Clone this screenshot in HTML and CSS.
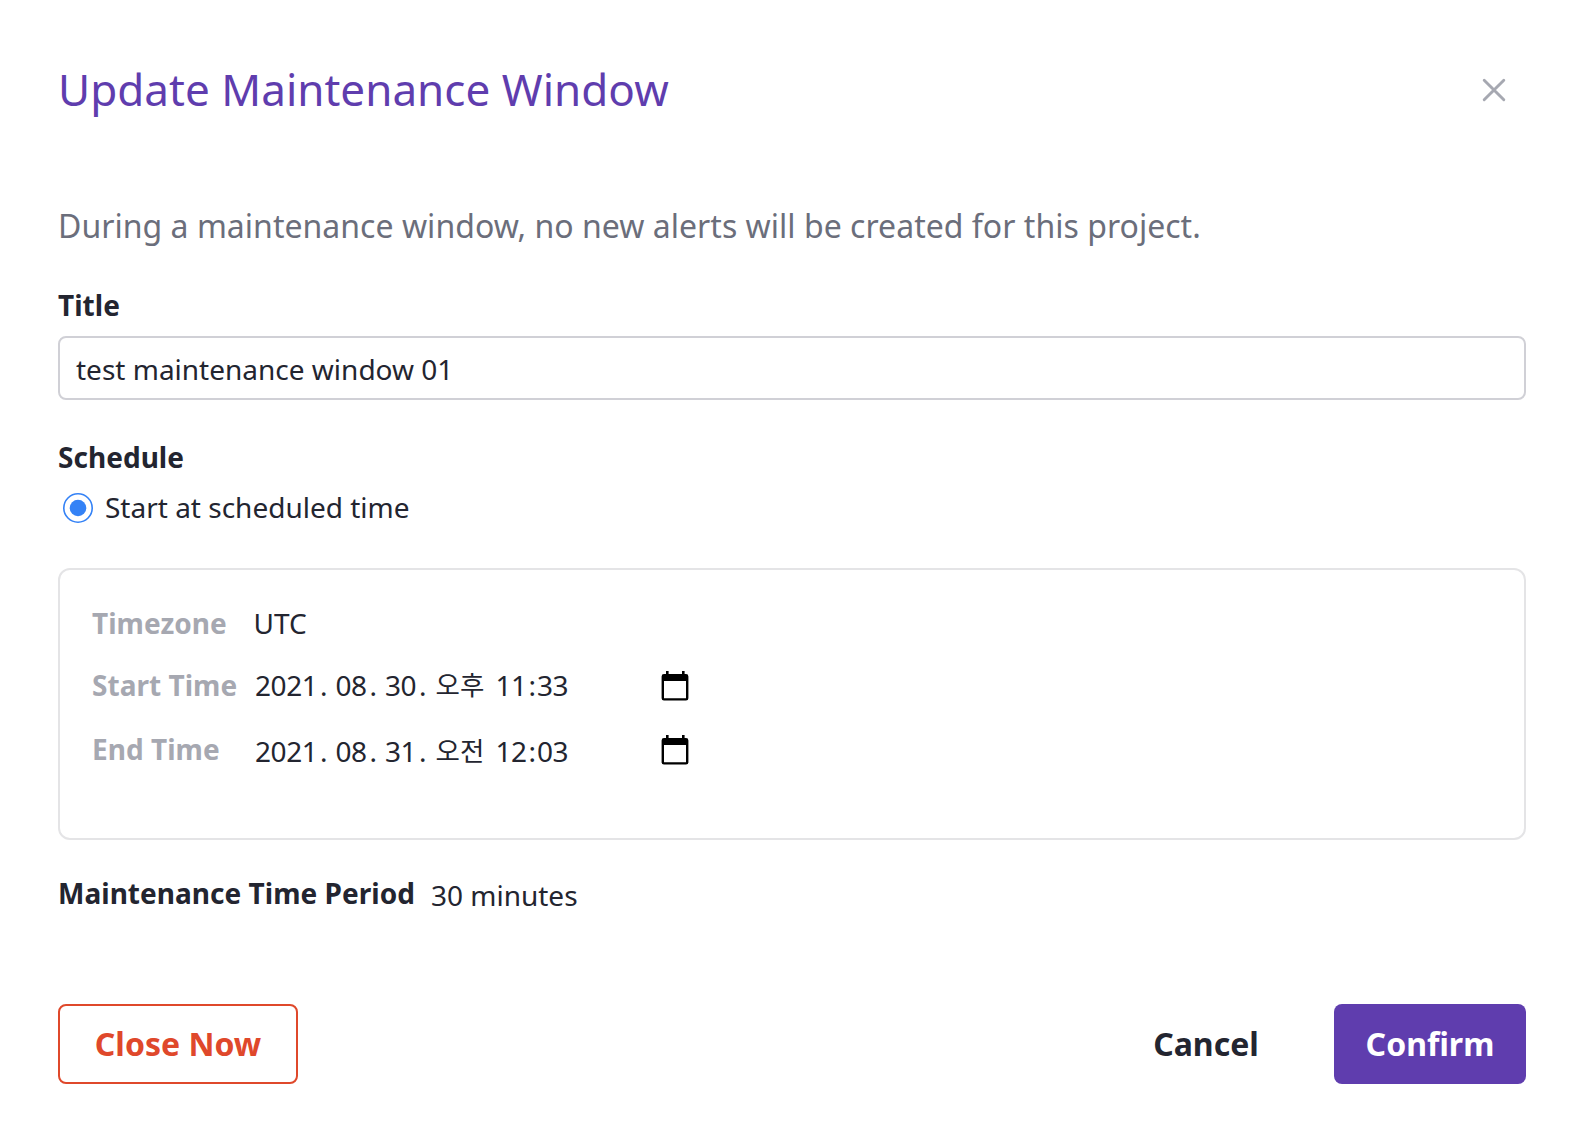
FILE: index.html
```html
<!DOCTYPE html>
<html lang="en">
<head>
<meta charset="utf-8">
<title>Update Maintenance Window</title>
<link rel="stylesheet" href="styles.css">
</head>
<body>
<main class="modal">
  <header class="modal-header">
    <h1 class="modal-title">Update Maintenance Window</h1>
    <button class="close-icon" type="button" aria-label="Close">
      <svg width="24" height="24" viewBox="0 0 24 24"><path d="M2.2 2.2 21.8 21.8M21.8 2.2 2.2 21.8" fill="none" stroke="#a6a8b1" stroke-width="2.9" stroke-linecap="round"/></svg>
    </button>
  </header>
  <p class="description">During a maintenance window, no new alerts will be created for this project.</p>
  <section class="field">
    <h2 class="label">Title</h2>
    <div class="text-input">test maintenance window 01</div>
  </section>
  <section class="field schedule">
    <h2 class="label">Schedule</h2>
    <div class="radio-row">
      <svg class="radio" width="30" height="30" viewBox="0 0 30 30"><circle cx="15" cy="15" r="14.2" fill="#fff" stroke="#3482f6" stroke-width="1.6"/><circle cx="15" cy="15" r="8.3" fill="#3482f6"/></svg>
      <span class="radio-text">Start at scheduled time</span>
    </div>
  </section>
  <section class="schedule-box">
    <div class="row">
      <span class="row-label">Timezone</span>
      <span class="row-value">UTC</span>
    </div>
    <div class="row">
      <span class="row-label">Start Time</span>
      <span class="datetime"><span class="year">2021</span><span class="dot">.</span><span class="part">08</span><span class="dot">.</span><span class="part">30</span><span class="dot">.</span><span class="ampm">오후</span><span class="hour">11</span><span class="colon">:</span><span class="minute">33</span></span>
      <svg class="calendar" width="28" height="30" viewBox="0 0 28 30"><path fill-rule="evenodd" d="M5 0h2.6v3h13.4V0h2.6v3H25a2.4 2.4 0 0 1 2.4 2.4v21.8a2.4 2.4 0 0 1-2.4 2.4H3a2.4 2.4 0 0 1-2.4-2.4V5.4A2.4 2.4 0 0 1 3 3h2zM3 10v17.2h22V10z"/></svg>
    </div>
    <div class="row">
      <span class="row-label">End Time</span>
      <span class="datetime end"><span class="year">2021</span><span class="dot">.</span><span class="part">08</span><span class="dot">.</span><span class="part">31</span><span class="dot">.</span><span class="ampm">오전</span><span class="hour">12</span><span class="colon">:</span><span class="minute">03</span></span>
      <svg class="calendar" width="28" height="30" viewBox="0 0 28 30"><path fill-rule="evenodd" d="M5 0h2.6v3h13.4V0h2.6v3H25a2.4 2.4 0 0 1 2.4 2.4v21.8a2.4 2.4 0 0 1-2.4 2.4H3a2.4 2.4 0 0 1-2.4-2.4V5.4A2.4 2.4 0 0 1 3 3h2zM3 10v17.2h22V10z"/></svg>
    </div>
  </section>
  <section class="period">
    <h2 class="label">Maintenance Time Period</h2>
    <span class="period-value">30 minutes</span>
  </section>
  <footer class="actions">
    <button class="btn danger" type="button">Close Now</button>
    <button class="btn plain" type="button">Cancel</button>
    <button class="btn primary" type="button">Confirm</button>
  </footer>
</main>
</body>
</html>
```
FILE: styles.css
```css
* { box-sizing: border-box; }
body {
  margin: 0;
  background: #fff;
  color: #232530;
  font: 28px/38px "Noto Sans", "Noto Sans CJK KR", sans-serif;
}
h1, h2, p { margin: 0; }
button { margin: 0; padding: 0; border: 0; background: none; font: inherit; }
svg { display: block; flex: none; }
.modal {
  display: flex;
  flex-direction: column;
  width: 1584px;
  height: 1136px;
  padding: 59px 58px 52px;
}
.modal-header {
  display: flex;
  justify-content: space-between;
  align-items: center;
  height: 60px;
  padding-right: 20px;
}
.modal-title { color: #5f3dae; font-size: 44px; font-weight: 400; line-height: 60px; letter-spacing: 0.02px; }
.close-icon { margin-top: 2px; }
.description { margin-top: 85px; color: #6b6e7b; font-size: 32px; line-height: 44px; letter-spacing: 0.025px; }
.label { font-size: 28px; font-weight: 700; line-height: 38px; letter-spacing: 0.03px; white-space: nowrap; }
.field { margin-top: 38px; }
.text-input {
  height: 64px;
  margin-top: 12px;
  padding: 1px 16px 0;
  border: 2px solid #d0d0d6;
  border-radius: 8px;
  line-height: 60px;
}
.radio-row { display: flex; align-items: center; gap: 12px; height: 38px; margin-top: 12px; padding-left: 5px; }
.radio { margin-top: 2px; }
.schedule-box {
  display: flex;
  flex-direction: column;
  height: 272px;
  margin-top: 42px;
  padding: 34px 32px;
  border: 2px solid #e4e4e6;
  border-radius: 12px;
}
.row { display: flex; align-items: center; height: 38px; margin-bottom: 26px; }
.row:first-child { margin-bottom: 24px; }
.row-label { width: 162px; color: #a6a8b1; font-weight: 700; letter-spacing: 0.03px; white-space: nowrap; }
.row-value { margin-left: -0.5px; }
.datetime { display: flex; width: 407px; padding-left: 1px; letter-spacing: -0.4px; }
.datetime.end { padding-top: 3px; }
.calendar { margin-top: 2px; }
.year { width: 65px; }
.dot { width: 15.5px; }
.part { width: 34px; }
.ampm { width: 61px; padding-left: 1px; font-size: 26.5px; letter-spacing: 0; }
.hour { width: 33px; }
.colon { width: 8.5px; }
.period { display: flex; gap: 16px; margin-top: 34px; }
.period-value { padding-top: 2px; }
.actions { display: flex; align-items: center; margin-top: auto; }
.btn { height: 80px; border-radius: 8px; font-size: 32px; font-weight: 700; }
.danger { width: 240px; margin-right: auto; border: 2px solid #df482b; color: #df482b; }
.plain { width: 184px; margin-right: 36px; color: #232530; }
.primary { width: 192px; background: #5f3dae; color: #fff; }
```
